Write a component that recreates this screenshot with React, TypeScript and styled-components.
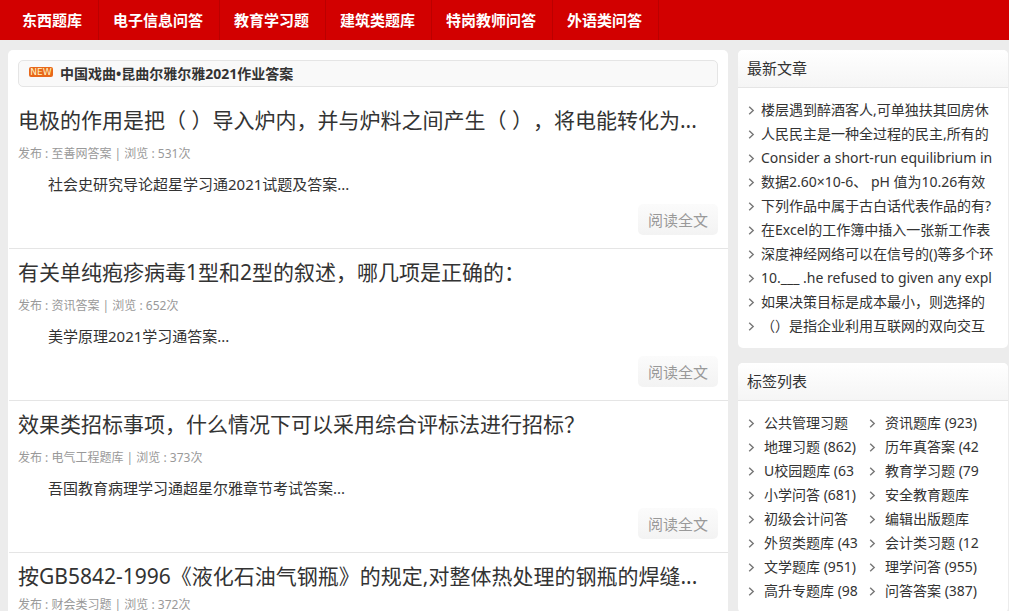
import React from "react";
import styled, { createGlobalStyle } from "styled-components";

const GlobalStyle = createGlobalStyle`
  * { box-sizing: border-box; }
  body {
    margin: 0;
    background: #ececec;
    color: #333;
    font-family: "Noto Sans", "Noto Sans CJK SC", sans-serif;
    font-size: 14px;
    line-height: 24px;
    text-spacing-trim: space-all;
  }
  a { color: inherit; text-decoration: none; }
  ul { margin: 0; padding: 0; list-style: none; }
  h2, h3, p { margin: 0; font-weight: 400; }
`;

const NavBar = styled.nav`
  background: #d20000;
  padding-left: 8px;
`;

const NavList = styled.ul`
  display: flex;
  height: 40px;
`;

const NavItem = styled.li`
  border-right: 1px solid #bb0000;
`;

const NavLink = styled.a`
  display: block;
  padding: 0 16px 0 14px;
  color: #fff;
  font-size: 15px;
  font-weight: 700;
  line-height: 40px;
  white-space: nowrap;
`;

const Page = styled.div`
  display: flex;
  align-items: flex-start;
  gap: 10px;
  padding: 10px 1px 0 8px;
`;

const Main = styled.main`
  flex: 1;
  min-width: 0;
  min-height: calc(100vh - 50px);
  background: #fff;
  border-radius: 5px 5px 0 0;
  padding-top: 10px;
`;

const Notice = styled.div`
  display: flex;
  align-items: center;
  gap: 7px;
  height: 27px;
  margin: 0 10px 10px;
  padding: 0 10px;
  border: 1px solid #e5e5e5;
  border-radius: 5px;
  background: #f9f9f9;
  font-weight: 700;
`;

const Badge = styled.span`
  width: 24px;
  height: 10px;
  margin-bottom: 3px;
  border-radius: 2px;
  background: #e8681a;
  color: #fff6c8;
  font-family: "DejaVu Sans", sans-serif;
  font-size: 9px;
  font-weight: 400;
  line-height: 10px;
  text-align: center;
`;

const Article = styled.article`
  margin-left: 1px;
  padding: 9px 10px 13px 9px;
  border-bottom: 1px solid #e5e5e5;
  &:last-child { border-bottom: 0; padding-bottom: 0; }
`;

const Title = styled.h2`
  font-size: 21px;
  line-height: 28px;
  white-space: nowrap;
  overflow: hidden;
  text-overflow: ellipsis;
`;

const Meta = styled.p<{ $tight?: boolean }>`
  margin-top: ${(p) => (p.$tight ? 5 : 10)}px;
  color: #999;
  font-size: 12px;
  line-height: 20px;
`;

const Summary = styled.p`
  margin-top: 8px;
  padding-left: 30px;
  font-size: 15px;
`;

const More = styled.a`
  display: block;
  width: 80px;
  height: 31px;
  margin: 8px 0 0 auto;
  border-radius: 5px;
  background: linear-gradient(#fbfbfb, #f3f3f3);
  color: #999;
  font-size: 15px;
  line-height: 32px;
  text-align: center;
`;

const Sidebar = styled.aside`
  display: flex;
  flex-direction: column;
  gap: 15px;
  width: 270px;
`;

const Card = styled.section`
  overflow: hidden;
  border-radius: 5px;
  background: #fff;
`;

const CardTitle = styled.h3`
  height: 38px;
  padding-left: 9px;
  border-bottom: 1px solid #e5e5e5;
  background: linear-gradient(#fff, #f5f5f5);
  font-size: 15px;
  line-height: 37px;
`;

const PostList = styled.ul`
  padding: 10px;
`;

const TagList = styled.ul`
  display: grid;
  grid-template-columns: 121px 121px;
  padding: 10px;
`;

const Entry = styled.li<{ $gap: number }>`
  display: flex;
  align-items: center;
  gap: ${(p) => p.$gap}px;
  height: 24px;
  white-space: nowrap;
`;

const Chevron = () => (
  <svg width="7" height="9" viewBox="0 0 7 9" fill="none" stroke="#777" strokeWidth="1.4" aria-hidden="true">
    <path d="M1.2 0.7 L5.2 4.5 L1.2 8.3" />
  </svg>
);

const nav = ["东西题库", "电子信息问答", "教育学习题", "建筑类题库", "特岗教师问答", "外语类问答"];

const articles = [
  {
    title: "电极的作用是把（ ）导入炉内，并与炉料之间产生（ ），将电能转化为...",
    source: "至善网答案",
    views: 531,
    summary: "社会史研究导论超星学习通2021试题及答案...",
  },
  {
    title: "有关单纯疱疹病毒1型和2型的叙述，哪几项是正确的：",
    source: "资讯答案",
    views: 652,
    summary: "美学原理2021学习通答案...",
  },
  {
    title: "效果类招标事项，什么情况下可以采用综合评标法进行招标？",
    source: "电气工程题库",
    views: 373,
    summary: "吾国教育病理学习通超星尔雅章节考试答案...",
  },
  {
    title: "按GB5842-1996《液化石油气钢瓶》的规定,对整体热处理的钢瓶的焊缝...",
    source: "财会类习题",
    views: 372,
  },
];

const posts = [
  "楼层遇到醉酒客人,可单独扶其回房休",
  "人民民主是一种全过程的民主,所有的",
  "Consider a short-run equilibrium in",
  "数据2.60×10-6、 pH 值为10.26有效",
  "下列作品中属于古白话代表作品的有?",
  "在Excel的工作簿中插入一张新工作表",
  "深度神经网络可以在信号的()等多个环",
  "10.___ .he refused to given any expl",
  "如果决策目标是成本最小，则选择的",
  "（）是指企业利用互联网的双向交互",
];

const tags = [
  "公共管理习题", "资讯题库 (923)",
  "地理习题 (862)", "历年真答案 (42",
  "U校园题库 (63", "教育学习题 (79",
  "小学问答 (681)", "安全教育题库",
  "初级会计问答", "编辑出版题库",
  "外贸类题库 (43", "会计类习题 (12",
  "文学题库 (951)", "理学问答 (955)",
  "高升专题库 (98", "问答答案 (387)",
];

export default function App() {
  return (
    <div lang="zh-CN">
      <GlobalStyle />
      <NavBar>
        <NavList>
          {nav.map((n) => (
            <NavItem key={n}><NavLink href="#">{n}</NavLink></NavItem>
          ))}
        </NavList>
      </NavBar>
      <Page>
        <Main>
          <Notice>
            <Badge>NEW</Badge>
            <a href="#">中国戏曲•昆曲尔雅尔雅2021作业答案</a>
          </Notice>
          {articles.map((a) => (
            <Article key={a.title}>
              <Title><a href="#">{a.title}</a></Title>
              <Meta $tight={!a.summary}>发布 : {a.source} | 浏览 : {a.views}次</Meta>
              {a.summary && (
                <>
                  <Summary>{a.summary}</Summary>
                  <More href="#">阅读全文</More>
                </>
              )}
            </Article>
          ))}
        </Main>
        <Sidebar>
          <Card>
            <CardTitle>最新文章</CardTitle>
            <PostList>
              {posts.map((t) => (
                <Entry key={t} $gap={6}><Chevron /><a href="#">{t}</a></Entry>
              ))}
            </PostList>
          </Card>
          <Card>
            <CardTitle>标签列表</CardTitle>
            <TagList>
              {tags.map((t) => (
                <Entry key={t} $gap={9}><Chevron /><a href="#">{t}</a></Entry>
              ))}
            </TagList>
          </Card>
        </Sidebar>
      </Page>
    </div>
  );
}
